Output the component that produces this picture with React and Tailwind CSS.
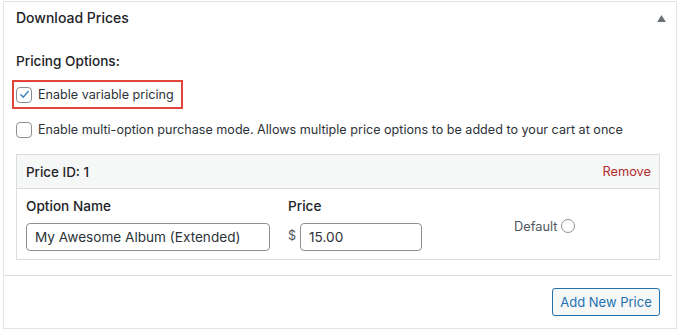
import React from 'react'

function Checkbox({ checked }) {
  return (
    <span className="flex items-center justify-center w-4 h-4 rounded-[4px] border border-[#8c8f94] bg-white shrink-0">
      {checked && (
        <svg viewBox="0 0 16 16" className="w-[13px] h-[13px]">
          <path d="M3.5 8.3 L6.6 11.2 L12.4 4.4" fill="none" stroke="#3582c4" strokeWidth="1.8" strokeLinecap="round" strokeLinejoin="round" />
        </svg>
      )}
    </span>
  )
}

export default function App() {
  return (
    <div className="w-[680px] h-[332px] bg-white pt-[1px] pl-[3px] text-[#1d2327]" style={{ fontFamily: 'Inter, "Noto Sans", sans-serif' }}>
      <div className="w-[674px] h-[328px] border border-[#e2e4e7] flex flex-col">
        {/* Header */}
        <div className="flex items-center justify-between h-[31px] pl-[12px] pr-[10px]">
          <h2 className="text-[14px] font-medium leading-5">Download Prices</h2>
          <svg viewBox="0 0 10 8" className="w-[9px] h-[7px] mt-[1px]">
            <path d="M5 0 L10 8 L0 8 Z" fill="#6c7075" />
          </svg>
        </div>

        {/* Pricing options */}
        <div className="mt-[18px] pl-[12px] text-[13.6px] font-medium leading-5">Pricing Options:</div>

        <div className="mt-[9px] ml-[8px] w-[171px] h-[29px] border-2 border-[#e2453b] flex items-center pl-[2px] gap-[6px]">
          <Checkbox checked />
          <span className="text-[12.6px] leading-5 text-[#2c3338]">Enable variable pricing</span>
        </div>

        <div className="mt-[11px] pl-[12px] flex items-center gap-[6px] h-5">
          <Checkbox />
          <span className="text-[12.6px] leading-5 text-[#2c3338]">
            Enable multi-option purchase mode. Allows multiple price options to be added to your cart at once
          </span>
        </div>

        {/* Price row */}
        <div className="mt-[14px] ml-[12px] w-[644px] border border-[#dcdcde]">
          <div className="flex items-center justify-between h-[34px] bg-[#f6f7f7] border-b border-[#dcdcde] pl-[9px] pr-[8px]">
            <span className="text-[13.4px] font-medium leading-5">Price ID: 1</span>
            <a className="text-[12.8px] leading-5 text-[#b32d2e]">Remove</a>
          </div>
          <div className="flex pl-[9px] pt-[7px] pb-[8px]">
            <div className="flex flex-col w-[244px]">
              <span className="text-[13.6px] font-medium leading-5">Option Name</span>
              <input
                readOnly
                value="My Awesome Album (Extended)"
                className="mt-[7px] h-[28px] w-[244px] rounded-[4px] border border-[#8c8f94] px-[8px] text-[13.6px] text-[#2c3338] outline-none"
              />
            </div>
            <div className="flex flex-col ml-[18px]">
              <span className="text-[13.6px] font-medium leading-5">Price</span>
              <div className="mt-[7px] flex items-center gap-[4px]">
                <span className="text-[12.6px] text-[#50575e] -mt-[2px]">$</span>
                <input
                  readOnly
                  value="15.00"
                  className="h-[28px] w-[122px] rounded-[4px] border border-[#8c8f94] px-[8px] text-[13.6px] text-[#2c3338] outline-none"
                />
              </div>
            </div>
            <div className="ml-[92px] mt-[21px] flex items-center gap-[3px] h-5">
              <span className="text-[12.8px] text-[#50575e] leading-5">Default</span>
              <span className="w-[14px] h-[14px] rounded-full border border-[#8c8f94] bg-white -mt-[3px]" />
            </div>
          </div>
        </div>

        <div className="mt-[15px] w-[668px] h-px bg-[#dcdcde]" />

        <div className="flex justify-end pr-[16px] mt-[12px]">
          <button className="h-[28px] w-[108px] rounded-[3px] border border-[#2271b1] bg-[#f6f7f7] text-[13px] text-[#2271b1] leading-5">
            Add New Price
          </button>
        </div>
      </div>
    </div>
  )
}
